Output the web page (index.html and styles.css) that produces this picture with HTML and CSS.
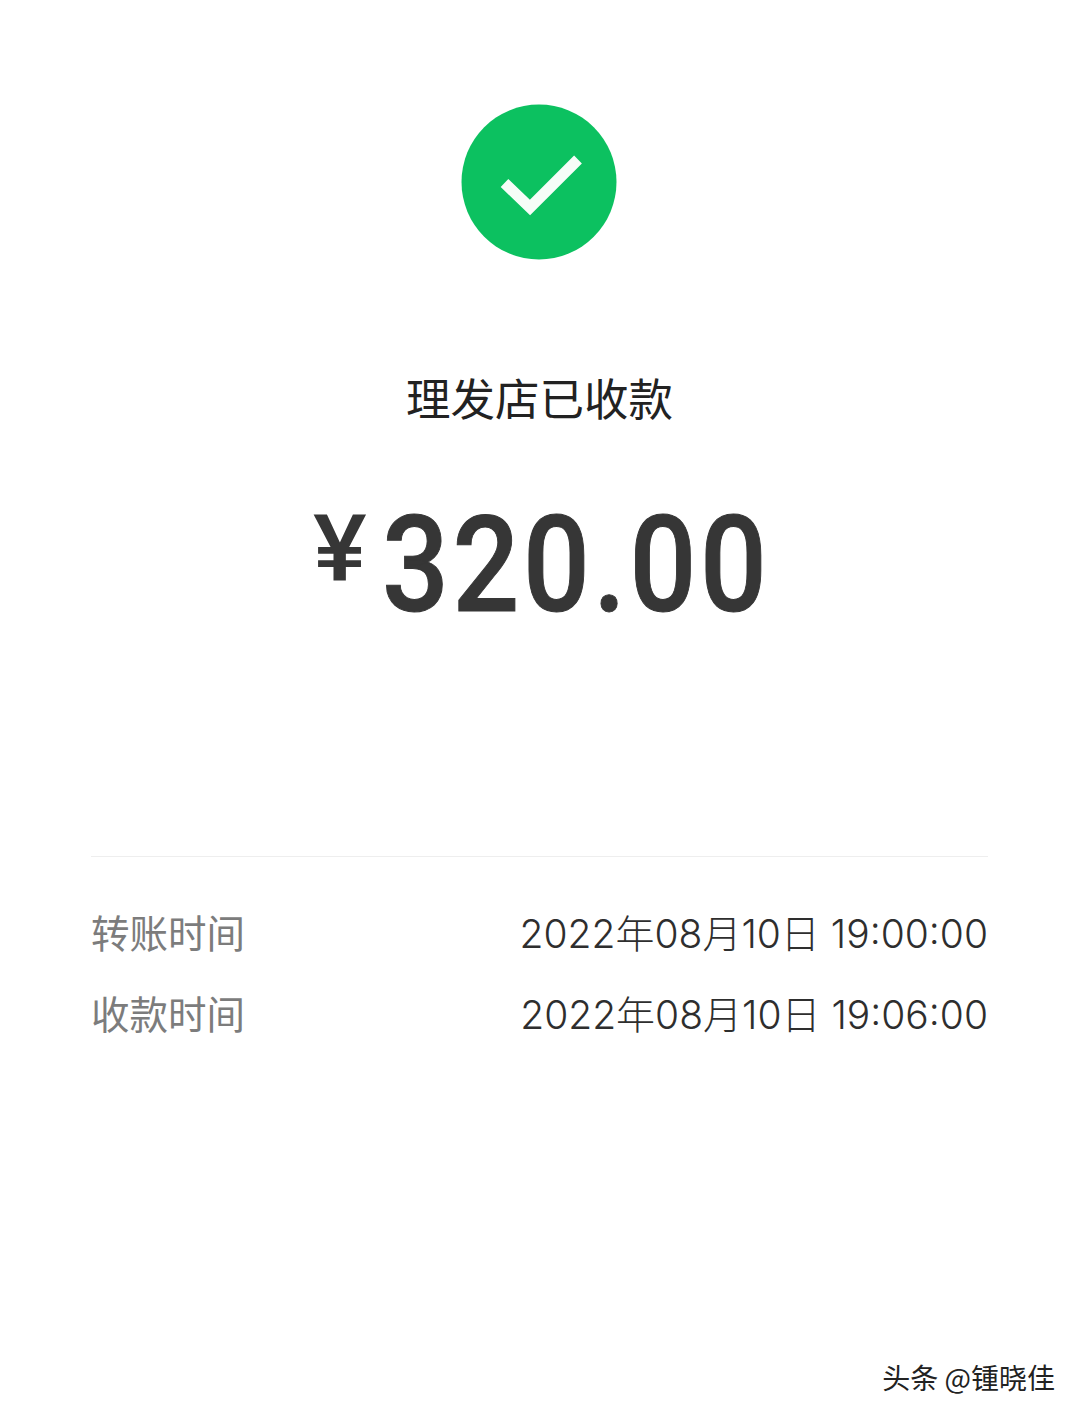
FILE: index.html
```html
<!DOCTYPE html>
<html lang="zh-CN">
<head>
    <meta charset="UTF-8">
    <title>理发店已收款</title>
    <link rel="stylesheet" href="styles.css">
</head>
<body>
    <div class="page">
        <svg class="check-icon" width="156" height="156" viewBox="0 0 156 156">
            <circle cx="78" cy="78" r="77.5" fill="#0cc160"/>
            <path d="M43.500 79 L69 103.500 L117 55.500" fill="none" stroke="#f6fdf8" stroke-width="11"/>
        </svg>

        <h1 class="title">理发店已收款</h1>

        <div class="amount">
            <span class="yen">¥</span>
            <span class="money">320.00</span>
        </div>

        <div class="details">
            <div class="row">
                <span class="label">转账时间</span>
                <span class="value">2022年08月10日 19:00:00</span>
            </div>
            <div class="row">
                <span class="label">收款时间</span>
                <span class="value">2022年08月10日 19:06:00</span>
            </div>
        </div>

        <div class="watermark">头条 @锺晓佳</div>
    </div>
</body>
</html>
```

FILE: styles.css
```css
html, body {
    margin: 0;
    padding: 0;
    background-color: #fff;
}
.page {
    width: 1079px;
    height: 1416px;
    box-sizing: border-box;
    padding-top: 104px;
    display: flex;
    flex-direction: column;
    align-items: center;
    font-family: Roboto, "Noto Sans CJK SC", sans-serif;
    overflow: hidden;
}
.check-icon {
    display: block;
    flex-shrink: 0;
    margin-right: 2px;
}
.title {
    margin: 104px 0 0;
    font-family: "Noto Sans CJK SC", sans-serif;
    font-size: 44.500px;
    line-height: 66px;
    font-weight: 400;
    color: #222;
}
.amount {
    margin-top: 67px;
    height: 140px;
    display: flex;
    align-items: flex-start;
    color: #363636;
}
.yen {
    font-size: 92px;
    line-height: 100px;
    font-weight: 500;
    margin-top: 3px;
    transform: scaleX(1.1);
    transform-origin: left center;
}
.money {
    font-size: 133px;
    line-height: 138px;
    font-weight: 500;
    letter-spacing: 4px;
    margin-left: 21px;
    transform: scaleX(0.885);
    transform-origin: left center;
    width: 384px;
    -webkit-text-stroke: 1px #363636;
}
.details {
    margin-top: 219px;
    width: 897px;
    border-top: 1px solid #eeeeee;
    padding-top: 33px;
}
.row {
    height: 81px;
    display: flex;
    justify-content: space-between;
    align-items: center;
}
.label {
    font-family: "Noto Sans CJK SC", sans-serif;
    font-size: 38.500px;
    color: #7c7c7c;
}
.value {
    font-family: Inter, "Noto Sans CJK SC", sans-serif;
    font-size: 39px;
    font-weight: 300;
    color: #2e2e2e;
}
.watermark {
    margin-top: 305px;
    align-self: flex-end;
    margin-right: 24px;
    font-family: "Noto Sans CJK SC", sans-serif;
    font-size: 28px;
    line-height: 40px;
    font-weight: 400;
    color: #222;
}
```
